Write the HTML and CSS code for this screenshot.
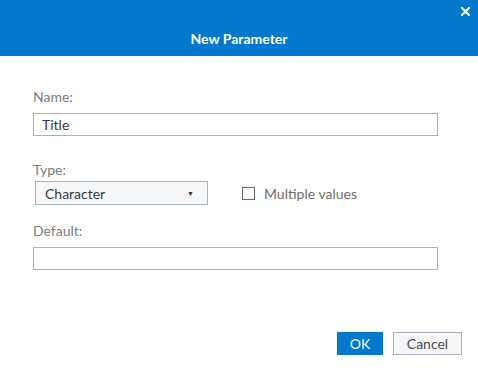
FILE: index.html
```html
<!DOCTYPE html>
<html lang="en">
<head>
  <meta charset="UTF-8">
  <title>New Parameter</title>
  <link rel="stylesheet" href="styles.css">
</head>
<body>
  <div class="dialog">
    <div class="dialog-header">
      <div class="close-row">
        <button class="close-btn" type="button" aria-label="Close">
          <svg width="9" height="9" viewBox="0 0 9 9">
            <path d="M1 1 L8 8 M8 1 L1 8" stroke="#fff" stroke-width="2.2" stroke-linecap="square"/>
          </svg>
        </button>
      </div>
      <h2 class="dialog-title">New Parameter</h2>
    </div>

    <form class="dialog-body">
      <label class="field-label" for="name">Name:</label>
      <input class="text-input" type="text" id="name" value="Title">

      <label class="field-label type-label" for="type">Type:</label>
      <div class="type-row">
        <div class="select-box" id="type">
          <span>Character</span>
          <span class="caret">&#9660;</span>
        </div>
        <label class="check">
          <span class="check-box"></span>
          <span>Multiple values</span>
        </label>
      </div>

      <label class="field-label default-label" for="default">Default:</label>
      <input class="text-input" type="text" id="default">
    </form>

    <div class="dialog-footer">
      <button class="btn btn-primary" type="button">OK</button>
      <button class="btn btn-secondary" type="button">Cancel</button>
    </div>
  </div>
</body>
</html>
```

FILE: styles.css
```css
body {
  margin: 0;
  font-family: Lato, "Open Sans", sans-serif;
  background: #fff;
}

.dialog {
  width: 478px;
  height: 369px;
  display: flex;
  flex-direction: column;
  background: #fff;
}

.dialog-header {
  height: 56px;
  background: #0478cc;
  box-sizing: border-box;
}

.close-row {
  display: flex;
  justify-content: flex-end;
  padding: 5px 7px 0 0;
  height: 16px;
}

.close-btn {
  background: none;
  border: none;
  padding: 0;
  width: 12px;
  height: 12px;
  display: flex;
  align-items: center;
  justify-content: center;
  cursor: pointer;
}

.dialog-title {
  margin: 0;
  padding-top: 8px;
  text-align: center;
  color: #fff;
  font-size: 14px;
  font-weight: bold;
  line-height: 20px;
}

.dialog-body {
  padding: 32px 40px 0 33px;
  display: flex;
  flex-direction: column;
}

.field-label {
  color: #7d7d7d;
  font-size: 14px;
  line-height: 18px;
  margin-bottom: 7px;
}

.type-label {
  margin-top: 25px;
  margin-bottom: 2px;
}

.default-label {
  margin-top: 17px;
}

.text-input {
  width: 405px;
  height: 23px;
  box-sizing: border-box;
  border: 1px solid #a9b3bd;
  border-radius: 0;
  padding: 0 8px;
  font-family: inherit;
  font-size: 14px;
  color: #3b3b3b;
  outline: none;
}

.type-row {
  display: flex;
  align-items: center;
}

.select-box {
  width: 173px;
  height: 24px;
  box-sizing: border-box;
  margin-left: 2px;
  border: 1px solid #a9b3bd;
  background: #f5f7f9;
  display: flex;
  align-items: center;
  justify-content: space-between;
  padding: 0 13px 0 9px;
  font-size: 14px;
  color: #3b3b3b;
}

.caret {
  font-size: 7px;
  color: #333;
}

.check {
  display: flex;
  align-items: center;
  gap: 9px;
  margin-left: 34px;
  font-size: 14px;
  color: #6e6e6e;
}

.check-box {
  width: 13px;
  height: 13px;
  box-sizing: border-box;
  border: 1px solid #5f6b78;
  background: #fff;
}

.dialog-footer {
  margin-top: auto;
  display: flex;
  justify-content: flex-end;
  gap: 10px;
  padding: 0 16px 14px 0;
}

.btn {
  height: 23px;
  box-sizing: border-box;
  font-family: inherit;
  font-size: 14px;
  border-radius: 0;
  cursor: pointer;
}

.btn-primary {
  width: 46px;
  background: #0478cc;
  border: 1px solid #0478cc;
  color: #fff;
}

.btn-secondary {
  width: 69px;
  background: #f5f7f9;
  border: 1px solid #a9b3bd;
  color: #4a4a4a;
}
```
